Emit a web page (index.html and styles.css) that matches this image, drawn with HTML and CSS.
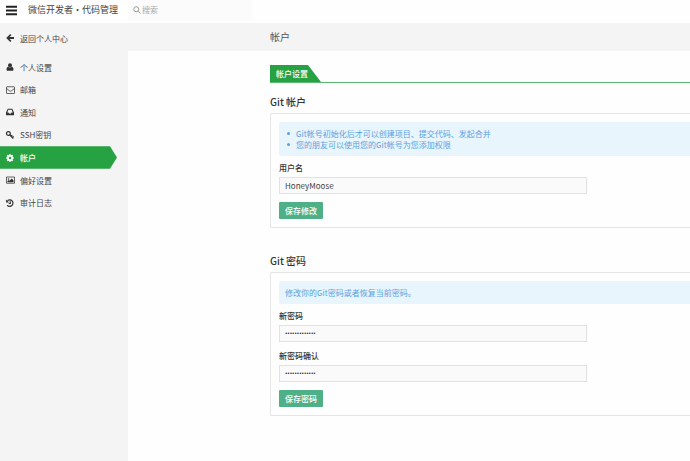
FILE: index.html
```html
<!DOCTYPE html>
<html lang="zh-CN">
<head>
    <meta charset="UTF-8">
    <meta name="viewport" content="width=device-width, initial-scale=1.0">
    <title>帐户 - 微信开发者・代码管理</title>
    <link rel="stylesheet" href="styles.css">
</head>
<body>

<header class="topbar">
    <button class="menu-btn" type="button" aria-label="菜单">
        <svg viewBox="0 0 16 16"><path d="M0 1h16v3H0zM0 6.500h16v3H0zM0 12h16v3H0z"/></svg>
    </button>
    <a class="brand" href="#">微信开发者・代码管理</a>
    <form class="search">
        <svg viewBox="0 0 16 16"><circle cx="6.5" cy="6.5" r="5"/><path d="M10.5 10.5L15 15"/></svg>
        <input type="search" placeholder="搜索" aria-label="搜索">
    </form>
</header>

<div class="page">
    <!-- Menú lateral -->
    <nav class="sidebar">
        <a class="nav-link back" href="#">
            <svg viewBox="0 0 16 16"><path d="M8.500 0l2.300 2.300L7 6.200h9v3.600H7l3.800 3.900L8.500 16l-8-8z"/></svg>
            返回个人中心
        </a>
        <div class="nav-list">
            <a class="nav-link" href="#">
                <svg viewBox="0 0 16 16"><circle cx="8" cy="4.500" r="4"/><path d="M4.500 7.500C2 8 1 10.500 1 13c0 1.500 1 2.500 2.500 2.500h9c1.500 0 2.500-1 2.500-2.500 0-2.500-1-5-3.500-5.500-2 2-5 2-7 0z"/></svg>
                个人设置
            </a>
            <a class="nav-link" href="#">
                <svg class="wide" viewBox="0 0 18 16"><path class="line" d="M2 1.500h14q1 0 1 1V14q0 1-1 1H2q-1 0-1-1V2.500q0-1 1-1zM1 5l6.500 5q1.500 1 3 0L17 5"/></svg>
                邮箱
            </a>
            <a class="nav-link" href="#">
                <svg viewBox="0 0 16 16"><path fill-rule="evenodd" d="M3.500 1.500h9L16 9v4.500q0 1-1 1H1q-1 0-1-1V9zM4.800 3.500L2.500 9H5l1 2h4l1-2h2.500l-2.300-5.500z"/></svg>
                通知
            </a>
            <a class="nav-link" href="#">
                <svg viewBox="0 0 16 16"><circle class="bold" cx="4.800" cy="5" r="3.800"/><path class="bold" d="M7.300 7.500l7.200 7.500M10 11l2.500-2.500M12.500 13.500L15.500 11"/></svg>
                SSH密钥
            </a>
            <a class="nav-link active" href="#" aria-current="page">
                <svg viewBox="0 0 16 16"><path fill-rule="evenodd" d="M6.800 0h2.400l.4 2.200 1.300.5 1.800-1.300 1.900 1.900-1.300 1.800.5 1.300 2.200.4v2.400l-2.200.4-.5 1.300 1.300 1.800-1.900 1.900-1.800-1.300-1.300.5-.4 2.200H6.800l-.4-2.200-1.300-.5-1.800 1.300-1.900-1.900 1.300-1.800-.5-1.300L0 9.200V6.800l2.200-.4.5-1.300-1.300-1.800 1.900-1.900 1.800 1.300 1.300-.5zM8 5.500a2.500 2.500 0 100 5 2.500 2.500 0 000-5z"/></svg>
                帐户
            </a>
            <a class="nav-link" href="#">
                <svg class="wide" viewBox="0 0 18 16"><path class="line" d="M1 2h16v12.500H1z"/><circle cx="5" cy="6" r="1.500"/><path d="M3 12.500V10l2.500-2L7 9.500l4.500-4.500L15 8.500v4z"/></svg>
                偏好设置
            </a>
            <a class="nav-link" href="#">
                <svg viewBox="0 0 16 16"><path class="bold" d="M3 3.500a6.500 6.500 0 11-.5 9M8.500 4.500V9H5.500"/><path d="M0 1v6h6z"/></svg>
                审计日志
            </a>
        </div>
    </nav>

    <main class="main">
        <h1 class="page-title">帐户</h1>

        <div class="content">
            <div class="tabs">
                <a class="tab" href="#">帐户设置</a>
            </div>

            <!-- Cuenta Git -->
            <section class="section">
                <h2 class="section-title">Git 帐户</h2>
                <form class="card">
                    <ul class="notice notice-list">
                        <li>Git帐号初始化后才可以创建项目、提交代码、发起合并</li>
                        <li>您的朋友可以使用您的Git帐号为您添加权限</li>
                    </ul>
                    <div class="field">
                        <label for="username">用户名</label>
                        <input type="text" id="username" value="HoneyMoose">
                    </div>
                    <button class="save-btn" type="button">保存修改</button>
                </form>
            </section>

            <!-- Contraseña Git -->
            <section class="section">
                <h2 class="section-title">Git 密码</h2>
                <form class="card">
                    <p class="notice">修改你的Git密码或者恢复当前密码。</p>
                    <div class="field">
                        <label for="password">新密码</label>
                        <input type="password" id="password" value="1234567890123">
                    </div>
                    <div class="field">
                        <label for="password-confirm">新密码确认</label>
                        <input type="password" id="password-confirm" value="1234567890123">
                    </div>
                    <button class="save-btn" type="button">保存密码</button>
                </form>
            </section>
        </div>
    </main>
</div>

</body>
</html>
```
FILE: styles.css
```css
* {
    box-sizing: border-box;
}

body {
    font-family: "Noto Sans CJK SC", sans-serif;
    font-size: 8px;
    line-height: 11px;
    color: #333;
    background-color: #fefefe;
    margin: 0;
    min-height: 100vh;
    display: flex;
    flex-direction: column;
}

h1, h2, p, ul {
    margin: 0;
    padding: 0;
}

a {
    color: inherit;
    text-decoration: none;
}

input, button {
    font-family: inherit;
    font-size: 8px;
    line-height: 12px;
}

svg {
    fill: currentColor;
    flex: none;
}

/* Barra superior */
.topbar {
    display: flex;
    align-items: flex-start;
    height: 23px;
    padding-left: 6px;
}

.menu-btn {
    width: 22px;
    height: 20px;
    padding: 0;
    border: 0;
    background: none;
    color: #222;
    text-align: left;
}

.menu-btn svg {
    display: block;
    width: 11px;
    height: 11px;
}

.brand {
    width: 100px;
    font-size: 9px;
    line-height: 20px;
    color: #444;
    white-space: nowrap;
}

.search {
    display: flex;
    align-items: center;
    width: 124px;
    height: 20px;
    padding-left: 5px;
    background-color: #fbfbfb;
    color: #999;
}

.search svg {
    width: 8px;
    height: 8px;
    fill: none;
    stroke: currentColor;
    stroke-width: 2;
}

.search input {
    flex: 1;
    min-width: 0;
    padding: 0 1px;
    border: 0;
    outline: 0;
    background: none;
}

.search input::placeholder {
    color: #aaa;
}

.page {
    display: flex;
    flex: 1;
}

/* Menú lateral */
.sidebar {
    width: 128px;
    flex: none;
    padding-top: 4px;
    background-color: #f4f4f4;
}

.nav-list {
    display: grid;
    grid-auto-rows: 1fr;
    height: 158px;
    margin-top: 7px;
}

.nav-link {
    display: flex;
    align-items: center;
    gap: 6px;
    padding-left: 6px;
    color: #444;
}

.nav-link.back {
    height: 22px;
}

.nav-link svg {
    width: 8px;
    height: 8px;
    color: #333;
    overflow: visible;
}

.nav-link svg.wide {
    width: 9px;
    margin-right: -1px;
}

.nav-link .line, .nav-link .bold {
    fill: none;
    stroke: currentColor;
    stroke-width: 1.5;
}

.nav-link .bold {
    stroke-width: 2.4;
}

.nav-link.active {
    width: 117px;
    background-color: #27a243;
    color: white;
    font-weight: 500;
    clip-path: polygon(0 0, 110px 0, 100% 50%, 110px 100%, 0 100%);
}

.nav-link.active svg {
    color: white;
}

/* Contenido */
.main {
    flex: 1;
    min-width: 0;
}

.page-title {
    padding-left: 142px;
    background-color: #f4f4f4;
    font-size: 10px;
    font-weight: normal;
    line-height: 28px;
    color: #555;
}

.content {
    padding: 14px 0 44px 142px;
}

.tabs {
    display: flex;
    border-bottom: 1px solid #5cb870;
}

.tab {
    padding: 0 13px 0 6px;
    background-color: #27a243;
    color: white;
    font-weight: 500;
    line-height: 17px;
    clip-path: polygon(0 0, 38px 0, 100% 100%, 0 100%);
}

.section {
    margin-top: 11px;
}

.section + .section {
    margin-top: 25px;
}

.section-title {
    margin-bottom: 3px;
    font-size: 10px;
    font-weight: 500;
    line-height: 16px;
}

.card {
    padding: 8px 0 8px 8px;
    border: 1px solid #e5e5e5;
    border-right: 0;
    border-radius: 2px 0 0 2px;
}

.notice {
    padding: 6px;
    background-color: #e9f5fd;
    border-radius: 2px 0 0 2px;
    color: #5b9fe0;
}

.notice-list {
    padding-left: 8px;
    list-style: none;
}

.notice-list li {
    display: flex;
    align-items: center;
    gap: 6px;
}

.notice-list li::before {
    content: "";
    width: 3px;
    height: 3px;
    border-radius: 50%;
    background-color: #5b9fe0;
}

.field {
    margin: 5px 0 7px;
}

.field label {
    display: block;
    margin-bottom: 2px;
    font-weight: 500;
    line-height: 14px;
}

.field input {
    display: block;
    width: 75%;
    height: 17px;
    padding: 0 5px;
    border: 1px solid #e2e2e2;
    background-color: #fafafa;
    color: #444;
}

.field input[type="password"] {
    font-family: Roboto, sans-serif;
    font-size: 7px;
    color: #222;
}

.save-btn {
    display: block;
    height: 17px;
    margin: 8px 0 0;
    padding: 0 6px;
    border: 0;
    border-radius: 1px;
    background-color: #4fb087;
    color: white;
    font-weight: 500;
    cursor: pointer;
}
```
